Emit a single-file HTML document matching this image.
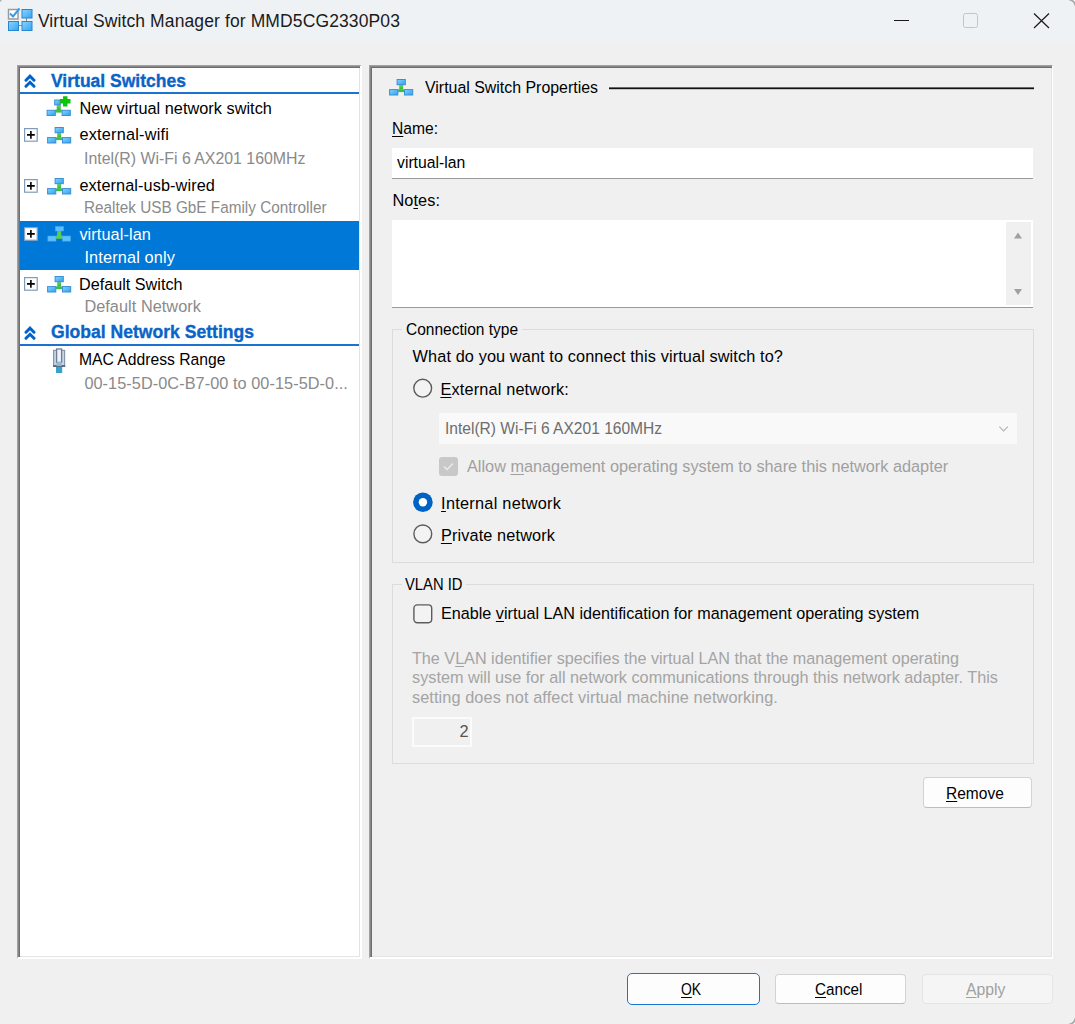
<!DOCTYPE html>
<html><head><meta charset="utf-8">
<style>
html,body{margin:0;padding:0;}
body{width:1075px;height:1024px;position:relative;overflow:hidden;background:#f0f0f0;font-family:"Liberation Sans",sans-serif;}
.a{position:absolute;box-sizing:border-box;}
.t{position:absolute;white-space:nowrap;font-family:"Liberation Sans",sans-serif;}
.t u{text-decoration:underline;text-underline-offset:2px;text-decoration-thickness:1px;}
</style></head><body>
<!-- title bar -->
<div class="a" style="left:0;top:0;width:1075px;height:44px;background:#eff2f5"></div>
<svg class="a" style="left:0;top:0" width="1075" height="44">
  <!-- app icon -->
  <rect x="8.5" y="9.5" width="9.5" height="9.5" fill="#fff" stroke="#9a9a9a" stroke-width="1.5"/>
  <path d="M10 13.5 L13 16.5 L19.5 8.5" fill="none" stroke="#3a9be8" stroke-width="2"/>
  <line x1="26.5" y1="18" x2="26.5" y2="22" stroke="#8a8a8a" stroke-width="1"/>
  <line x1="18" y1="25.5" x2="22" y2="25.5" stroke="#8a8a8a" stroke-width="1"/>
  <defs><linearGradient id="bg1" x1="0" y1="0" x2="1" y2="1"><stop offset="0" stop-color="#8fd3ff"/><stop offset="1" stop-color="#2ea6f5"/></linearGradient></defs>
  <rect x="22" y="9.5" width="10" height="8.5" fill="url(#bg1)" stroke="#2a86cf" stroke-width="1"/>
  <rect x="8.5" y="21.5" width="10" height="9" fill="url(#bg1)" stroke="#2a86cf" stroke-width="1"/>
  <rect x="22" y="21.5" width="10" height="9" fill="url(#bg1)" stroke="#2a86cf" stroke-width="1"/>
  <!-- min/max/close -->
  <line x1="894" y1="20.5" x2="909" y2="20.5" stroke="#1a1a1a" stroke-width="1"/>
  <rect x="963.5" y="13.5" width="14" height="14" rx="2" fill="none" stroke="#c4c4c4" stroke-width="1"/>
  <path d="M1034 13.5 L1049 28 M1049 13.5 L1034 28" stroke="#1a1a1a" stroke-width="1.2"/>
</svg>

<!-- left panel -->
<div class="a" style="left:17px;top:65px;width:345px;height:894px;background:#fff;border-top:1px solid #a0a0a0;border-left:1px solid #a0a0a0;border-right:2px solid #fff;border-bottom:2px solid #fff;box-shadow:inset 1px 1px 0 #888, inset 2px 2px 0 #6d6d6d, inset -1px -1px 0 #e3e3e3"></div>
<div class="a" style="left:20px;top:92px;width:339px;height:2px;background:#1a73d1"></div>
<div class="a" style="left:20px;top:344px;width:339px;height:2px;background:#1a73d1"></div>
<div class="a" style="left:20px;top:221px;width:339px;height:49px;background:#0078d7"></div>

<!-- right panel -->
<div class="a" style="left:369px;top:65px;width:684px;height:894px;background:#f0f0f0;border-top:1px solid #a0a0a0;border-left:1px solid #a0a0a0;border-right:1px solid #fff;border-bottom:2px solid #fff;box-shadow:inset 1px 1px 0 #888, inset 2px 2px 0 #6d6d6d, inset -1px -1px 0 #e3e3e3"></div>

<!-- properties line -->
<div class="a" style="left:609px;top:87px;width:425px;height:1px;background:#6a6a6a"></div><div class="a" style="left:609px;top:88px;width:425px;height:1px;background:#111"></div><div class="a" style="left:609px;top:89px;width:425px;height:1px;background:#c4c4c4"></div>
<!-- name input -->
<div class="a" style="left:392px;top:148px;width:641px;height:31px;background:#fff;border-bottom:1px solid #9a9a9a"></div>
<!-- notes -->
<div class="a" style="left:392px;top:220px;width:641px;height:88px;background:#fff;border-bottom:1px solid #9a9a9a"></div>
<div class="a" style="left:1006px;top:222px;width:25px;height:83px;background:#f0f0f0"></div>
<svg class="a" style="left:1006px;top:222px" width="25" height="83">
  <path d="M8 16.5 L12 10.5 L16 16.5 Z" fill="#a0a0a0"/>
  <path d="M8 67 L12 73 L16 67 Z" fill="#a0a0a0"/>
</svg>

<!-- connection type group -->
<div class="a" style="left:392px;top:329px;width:642px;height:234px;border:1px solid #dcdcdc"></div>
<div class="a" style="left:402px;top:322px;width:120px;height:14px;background:#f0f0f0"></div>
<!-- radios -->
<svg class="a" style="left:412px;top:378px" width="22" height="22"><circle cx="10.7" cy="10.2" r="8.9" fill="#f3f3f3" stroke="#5c5c5c" stroke-width="1.4"/></svg>
<svg class="a" style="left:412px;top:492px" width="22" height="22"><circle cx="10.9" cy="10.3" r="9.8" fill="#0062c4"/><circle cx="10.9" cy="10.3" r="4.2" fill="#fff"/></svg>
<svg class="a" style="left:412px;top:523px" width="22" height="22"><circle cx="10.8" cy="10.9" r="8.9" fill="#f3f3f3" stroke="#5c5c5c" stroke-width="1.4"/></svg>
<!-- combobox -->
<div class="a" style="left:439px;top:413px;width:578px;height:31px;background:#f9f9f9"></div>
<svg class="a" style="left:997px;top:424px" width="14" height="12"><path d="M2.3 2.7 L6.6 7 L10.9 2.7" fill="none" stroke="#b4b4b4" stroke-width="1.2"/></svg>
<!-- disabled checkbox -->
<div class="a" style="left:439px;top:457px;width:19px;height:19px;border-radius:3px;background:#c8c8c8"></div>
<svg class="a" style="left:439px;top:457px" width="19" height="19"><path d="M5 9.5 L8 12.5 L14 6.5" fill="none" stroke="#ececec" stroke-width="1.3"/></svg>

<!-- VLAN group -->
<div class="a" style="left:392px;top:584px;width:642px;height:180px;border:1px solid #dcdcdc"></div>
<div class="a" style="left:402px;top:577px;width:64px;height:14px;background:#f0f0f0"></div>
<svg class="a" style="left:412px;top:603px" width="22" height="22"><rect x="1.9" y="1.9" width="17.8" height="17.8" rx="3.4" fill="#f3f3f3" stroke="#5c5c5c" stroke-width="1.4"/></svg>
<!-- number box -->
<div class="a" style="left:412px;top:717px;width:60px;height:30px;border:2px solid #fbfbfb;background:#f0f0f0"></div>

<!-- Remove -->
<div class="a" style="left:923px;top:777px;width:109px;height:31px;border-radius:4px;background:#fdfdfd;border:1px solid #d3d3d3;border-bottom-color:#bdbdbd"></div>

<!-- bottom buttons -->
<div class="a" style="left:627px;top:973px;width:133px;height:32px;border-radius:5px;background:#fdfdfd;border:1.5px solid #1a74d2"></div>
<div class="a" style="left:775px;top:974px;width:131px;height:30px;border-radius:4px;background:#fdfdfd;border:1px solid #d3d3d3;border-bottom-color:#bdbdbd"></div>
<div class="a" style="left:922px;top:974px;width:131px;height:30px;border-radius:4px;background:#f5f5f5;border:1px solid #e5e5e5"></div>

<svg class="a" style="left:0;top:0" width="1075" height="1024">
<path d="M0 0 H1.4 V1.4 H0 Z" fill="#aaa"/>
<path d="M1069 -0.5 A8 8 0 0 1 1075.5 6" fill="none" stroke="#a8a8a8" stroke-width="1.6"/>
<path d="M1075.5 1018 A8 8 0 0 1 1069 1024.5" fill="none" stroke="#a8a8a8" stroke-width="1.6"/>
</svg>
<svg width="0" height="0" style="position:absolute"><defs>
<linearGradient id="nb" x1="0" y1="0" x2="1" y2="1"><stop offset="0" stop-color="#8ad4ff"/><stop offset="1" stop-color="#2aa0f0"/></linearGradient>
<linearGradient id="ng" x1="0" y1="0" x2="0" y2="1"><stop offset="0" stop-color="#6fd56f"/><stop offset="1" stop-color="#2db92d"/></linearGradient>
</defs></svg>
<svg class="a" style="left:23.6px;top:72.5px" width="14" height="16" viewBox="0 0 14 16">
<path d="M2 7.2 L6 3.2 L10 7.2" fill="none" stroke="#0063cc" stroke-width="3" stroke-linejoin="miter" stroke-linecap="round"/>
<path d="M2 13.3 L6 9.3 L10 13.3" fill="none" stroke="#0063cc" stroke-width="3" stroke-linejoin="miter" stroke-linecap="round"/>
</svg>
<svg class="a" style="left:23.6px;top:325.2px" width="14" height="16" viewBox="0 0 14 16">
<path d="M2 7.2 L6 3.2 L10 7.2" fill="none" stroke="#0063cc" stroke-width="3" stroke-linejoin="miter" stroke-linecap="round"/>
<path d="M2 13.3 L6 9.3 L10 13.3" fill="none" stroke="#0063cc" stroke-width="3" stroke-linejoin="miter" stroke-linecap="round"/>
</svg>
<svg class="a" style="left:45.9px;top:96.2px" width="28" height="22" viewBox="0 0 28 22"><rect x="10.7" y="8.6" width="4.1" height="5.4" fill="url(#ng)"/><rect x="9.4" y="13.6" width="6.4" height="3" fill="#43c043"/><rect x="8.7" y="4" width="5.5" height="4.9" fill="url(#nb)" stroke="#3b8fd4" stroke-width="1"/><rect x="1.1" y="14.3" width="8.2" height="5.2" fill="url(#nb)" stroke="#3b8fd4" stroke-width="1"/><rect x="16.1" y="14.3" width="8.2" height="5.2" fill="url(#nb)" stroke="#3b8fd4" stroke-width="1"/><path d="M14 5.3 H24.5 M19.25 0.2 V10.6" stroke="#0fbf0f" stroke-width="4.4"/><path d="M15 5.3 H23.5 M19.25 1.2 V9.6" stroke="#00d000" stroke-width="1.6"/></svg>
<svg class="a" style="left:24.3px;top:128.0px" width="14" height="14" viewBox="0 0 14 14">
<rect x="0.6" y="0.6" width="12.6" height="12.6" fill="#fff" stroke="#7f9dbb" stroke-width="1.2"/>
<path d="M3 6.9 H10.8 M6.9 3 V10.8" stroke="#000" stroke-width="1.6"/>
</svg>
<svg class="a" style="left:46.5px;top:126.8px" width="26" height="18" viewBox="0 0 26 18"><g><rect x="10.2" y="5.2" width="3.9" height="5.5" fill="url(#ng)"/><rect x="8.5" y="10.4" width="7" height="2.7" fill="#3fbf3f"/><rect x="8.1" y="0.5" width="8.2" height="5.2" fill="url(#nb)" stroke="#3b8fd4" stroke-width="1"/><rect x="0.6" y="10.6" width="8.2" height="5.4" fill="url(#nb)" stroke="#3b8fd4" stroke-width="1"/><rect x="15.5" y="10.6" width="8.2" height="5.4" fill="url(#nb)" stroke="#3b8fd4" stroke-width="1"/></g></svg>
<svg class="a" style="left:24.3px;top:178.7px" width="14" height="14" viewBox="0 0 14 14">
<rect x="0.6" y="0.6" width="12.6" height="12.6" fill="#fff" stroke="#7f9dbb" stroke-width="1.2"/>
<path d="M3 6.9 H10.8 M6.9 3 V10.8" stroke="#000" stroke-width="1.6"/>
</svg>
<svg class="a" style="left:46.5px;top:177.5px" width="26" height="18" viewBox="0 0 26 18"><g><rect x="10.2" y="5.2" width="3.9" height="5.5" fill="url(#ng)"/><rect x="8.5" y="10.4" width="7" height="2.7" fill="#3fbf3f"/><rect x="8.1" y="0.5" width="8.2" height="5.2" fill="url(#nb)" stroke="#3b8fd4" stroke-width="1"/><rect x="0.6" y="10.6" width="8.2" height="5.4" fill="url(#nb)" stroke="#3b8fd4" stroke-width="1"/><rect x="15.5" y="10.6" width="8.2" height="5.4" fill="url(#nb)" stroke="#3b8fd4" stroke-width="1"/></g></svg>
<svg class="a" style="left:24.3px;top:227.2px" width="14" height="14" viewBox="0 0 14 14">
<rect x="0.6" y="0.6" width="12.6" height="12.6" fill="#fff" stroke="#8aa4c0" stroke-width="1.2"/>
<path d="M3 6.9 H10.8 M6.9 3 V10.8" stroke="#000" stroke-width="1.6"/>
</svg>
<svg class="a" style="left:46.5px;top:226.4px" width="26" height="18" viewBox="0 0 26 18"><rect x="10.2" y="5" width="4" height="6" fill="#5ccf4a"/><rect x="8.6" y="9.6" width="7.2" height="3.2" fill="#5ccf4a"/><rect x="8.3" y="0.4" width="8.4" height="4.6" fill="#5cc0ff" stroke="#3aa0f0" stroke-width="0.8" stroke-opacity="0.6"/><rect x="0.8" y="10" width="8.2" height="5.2" fill="#5cc0ff" stroke="#3aa0f0" stroke-width="0.8" stroke-opacity="0.6"/><rect x="15.4" y="10" width="8.2" height="5.2" fill="#5cc0ff" stroke="#3aa0f0" stroke-width="0.8" stroke-opacity="0.6"/></svg>
<svg class="a" style="left:24.3px;top:277.2px" width="14" height="14" viewBox="0 0 14 14">
<rect x="0.6" y="0.6" width="12.6" height="12.6" fill="#fff" stroke="#7f9dbb" stroke-width="1.2"/>
<path d="M3 6.9 H10.8 M6.9 3 V10.8" stroke="#000" stroke-width="1.6"/>
</svg>
<svg class="a" style="left:46.5px;top:276.0px" width="26" height="18" viewBox="0 0 26 18"><g><rect x="10.2" y="5.2" width="3.9" height="5.5" fill="url(#ng)"/><rect x="8.5" y="10.4" width="7" height="2.7" fill="#3fbf3f"/><rect x="8.1" y="0.5" width="8.2" height="5.2" fill="url(#nb)" stroke="#3b8fd4" stroke-width="1"/><rect x="0.6" y="10.6" width="8.2" height="5.4" fill="url(#nb)" stroke="#3b8fd4" stroke-width="1"/><rect x="15.5" y="10.6" width="8.2" height="5.4" fill="url(#nb)" stroke="#3b8fd4" stroke-width="1"/></g></svg>
<svg class="a" style="left:52px;top:348px" width="14" height="26" viewBox="0 0 14 26"><rect x="1.6" y="2.4" width="11" height="16" fill="#c9d6e6" stroke="#8896aa" stroke-width="1.2"/><rect x="1.1" y="17" width="12" height="2" fill="#5d6d82"/><rect x="4.6" y="1" width="5" height="13.4" fill="#eef2fa" stroke="#6f7d92" stroke-width="1.3"/><rect x="4.6" y="14" width="5" height="4" fill="#8cbad8"/><rect x="4" y="19" width="6.2" height="6" fill="#3aa0d0"/></svg>
<svg class="a" style="left:388.5px;top:78.8px" width="26" height="18" viewBox="0 0 26 18"><g><rect x="10.2" y="5.2" width="3.9" height="5.5" fill="url(#ng)"/><rect x="8.5" y="10.4" width="7" height="2.7" fill="#3fbf3f"/><rect x="8.1" y="0.5" width="8.2" height="5.2" fill="url(#nb)" stroke="#3b8fd4" stroke-width="1"/><rect x="0.6" y="10.6" width="8.2" height="5.4" fill="url(#nb)" stroke="#3b8fd4" stroke-width="1"/><rect x="15.5" y="10.6" width="8.2" height="5.4" fill="url(#nb)" stroke="#3b8fd4" stroke-width="1"/></g></svg>
<div class="t" style="left:37.9px;top:13.1px;font-size:17.5px;line-height:17.5px;font-weight:normal;color:#1b1b1b;letter-spacing:0.112px">Virtual Switch Manager for MMD5CG2330P03</div>
<div class="t" style="left:50.9px;top:72.6px;font-size:17.6px;line-height:17.6px;font-weight:bold;color:#0a64c8;transform:scaleX(0.9956);transform-origin:0 0;-webkit-text-stroke:0.35px #0a64c8">Virtual Switches</div>
<div class="t" style="left:79.4px;top:100.4px;font-size:16.3px;line-height:16.3px;font-weight:normal;color:#000;letter-spacing:0.027px">New virtual network switch</div>
<div class="t" style="left:79.4px;top:126.3px;font-size:16.3px;line-height:16.3px;font-weight:normal;color:#000;letter-spacing:0.219px">external-wifi</div>
<div class="t" style="left:84.4px;top:149.8px;font-size:16.3px;line-height:16.3px;font-weight:normal;color:#8a8a8a;transform:scaleX(0.9753);transform-origin:0 0">Intel(R) Wi-Fi 6 AX201 160MHz</div>
<div class="t" style="left:79.4px;top:177.0px;font-size:16.3px;line-height:16.3px;font-weight:normal;color:#000;letter-spacing:0.092px">external-usb-wired</div>
<div class="t" style="left:84.4px;top:199.3px;font-size:16.3px;line-height:16.3px;font-weight:normal;color:#8a8a8a;transform:scaleX(0.9404);transform-origin:0 0">Realtek USB GbE Family Controller</div>
<div class="t" style="left:79.4px;top:226.1px;font-size:16.3px;line-height:16.3px;font-weight:normal;color:#fff;letter-spacing:0.091px">virtual-lan</div>
<div class="t" style="left:84.4px;top:248.7px;font-size:16.3px;line-height:16.3px;font-weight:normal;color:#fff;letter-spacing:0.150px">Internal only</div>
<div class="t" style="left:79.4px;top:275.5px;font-size:16.3px;line-height:16.3px;font-weight:normal;color:#000;transform:scaleX(0.9944);transform-origin:0 0">Default Switch</div>
<div class="t" style="left:84.4px;top:298.1px;font-size:16.3px;line-height:16.3px;font-weight:normal;color:#8a8a8a;letter-spacing:0.048px">Default Network</div>
<div class="t" style="left:50.9px;top:324.4px;font-size:17.6px;line-height:17.6px;font-weight:bold;color:#0a64c8;transform:scaleX(0.9983);transform-origin:0 0;-webkit-text-stroke:0.35px #0a64c8">Global Network Settings</div>
<div class="t" style="left:79.4px;top:351.3px;font-size:16.3px;line-height:16.3px;font-weight:normal;color:#000;transform:scaleX(0.9635);transform-origin:0 0">MAC Address Range</div>
<div class="t" style="left:84.4px;top:374.5px;font-size:16.3px;line-height:16.3px;font-weight:normal;color:#8a8a8a;letter-spacing:0.060px">00-15-5D-0C-B7-00 to 00-15-5D-0...</div>
<div class="t" style="left:424.7px;top:79.0px;font-size:16.3px;line-height:16.3px;font-weight:normal;color:#000;transform:scaleX(0.9771);transform-origin:0 0">Virtual Switch Properties</div>
<div class="t" style="left:392.4px;top:119.9px;font-size:16.3px;line-height:16.3px;font-weight:normal;color:#000;transform:scaleX(0.9610);transform-origin:0 0"><u>N</u>ame:</div>
<div class="t" style="left:396.6px;top:154.1px;font-size:16.3px;line-height:16.3px;font-weight:normal;color:#000;transform:scaleX(0.9675);transform-origin:0 0">virtual-lan</div>
<div class="t" style="left:392.4px;top:191.6px;font-size:16.3px;line-height:16.3px;font-weight:normal;color:#000;letter-spacing:0.087px">No<u>t</u>es:</div>
<div class="t" style="left:405.8px;top:321.0px;font-size:16.3px;line-height:16.3px;font-weight:normal;color:#000;transform:scaleX(0.9526);transform-origin:0 0">Connection type</div>
<div class="t" style="left:412.6px;top:347.9px;font-size:16.3px;line-height:16.3px;font-weight:normal;color:#000;letter-spacing:0.112px">What do you want to connect this virtual switch to?</div>
<div class="t" style="left:440.4px;top:381.1px;font-size:16.3px;line-height:16.3px;font-weight:normal;color:#000;letter-spacing:0.169px"><u>E</u>xternal network:</div>
<div class="t" style="left:444.8px;top:420.2px;font-size:16.3px;line-height:16.3px;font-weight:normal;color:#6d6d6d;transform:scaleX(0.9559);transform-origin:0 0">Intel(R) Wi-Fi 6 AX201 160MHz</div>
<div class="t" style="left:466.8px;top:457.8px;font-size:16.3px;line-height:16.3px;font-weight:normal;color:#a0a0a0;transform:scaleX(0.9993);transform-origin:0 0">Allow <u>m</u>anagement operating system to share this network adapter</div>
<div class="t" style="left:441.1px;top:495.2px;font-size:16.3px;line-height:16.3px;font-weight:normal;color:#000;letter-spacing:0.264px"><u>I</u>nternal network</div>
<div class="t" style="left:440.9px;top:526.7px;font-size:16.3px;line-height:16.3px;font-weight:normal;color:#000;letter-spacing:0.127px"><u>P</u>rivate network</div>
<div class="t" style="left:405.4px;top:576.1px;font-size:16.3px;line-height:16.3px;font-weight:normal;color:#000;transform:scaleX(0.9077);transform-origin:0 0">VLAN ID</div>
<div class="t" style="left:440.6px;top:604.9px;font-size:16.3px;line-height:16.3px;font-weight:normal;color:#000;transform:scaleX(0.9934);transform-origin:0 0">Enable <u>v</u>irtual LAN identification for management operating system</div>
<div class="t" style="left:411.9px;top:649.6px;font-size:16.3px;line-height:16.3px;font-weight:normal;color:#a4a4a4;transform:scaleX(0.9925);transform-origin:0 0">The V<u>L</u>AN identifier specifies the virtual LAN that the management operating</div>
<div class="t" style="left:411.9px;top:668.6px;font-size:16.3px;line-height:16.3px;font-weight:normal;color:#a4a4a4;transform:scaleX(0.9983);transform-origin:0 0">system will use for all network communications through this network adapter. This</div>
<div class="t" style="left:411.9px;top:688.5px;font-size:16.3px;line-height:16.3px;font-weight:normal;color:#a4a4a4;letter-spacing:0.104px">setting does not affect virtual machine networking.</div>
<div class="t" style="left:459.5px;top:723.1px;font-size:16.3px;line-height:16.3px;font-weight:normal;color:#555;letter-spacing:0.000px">2</div>
<div class="t" style="left:946.3px;top:784.7px;font-size:16.3px;line-height:16.3px;font-weight:normal;color:#000;transform:scaleX(0.9532);transform-origin:0 0"><u>R</u>emove</div>
<div class="t" style="left:681.1px;top:981.2px;font-size:16.3px;line-height:16.3px;font-weight:normal;color:#000;transform:scaleX(0.8542);transform-origin:0 0"><u>O</u>K</div>
<div class="t" style="left:814.5px;top:981.4px;font-size:16.3px;line-height:16.3px;font-weight:normal;color:#000;transform:scaleX(0.9351);transform-origin:0 0"><u>C</u>ancel</div>
<div class="t" style="left:966.1px;top:981.4px;font-size:16.3px;line-height:16.3px;font-weight:normal;color:#a0a0a0;transform:scaleX(0.9672);transform-origin:0 0"><u>A</u>pply</div>
</body></html>
